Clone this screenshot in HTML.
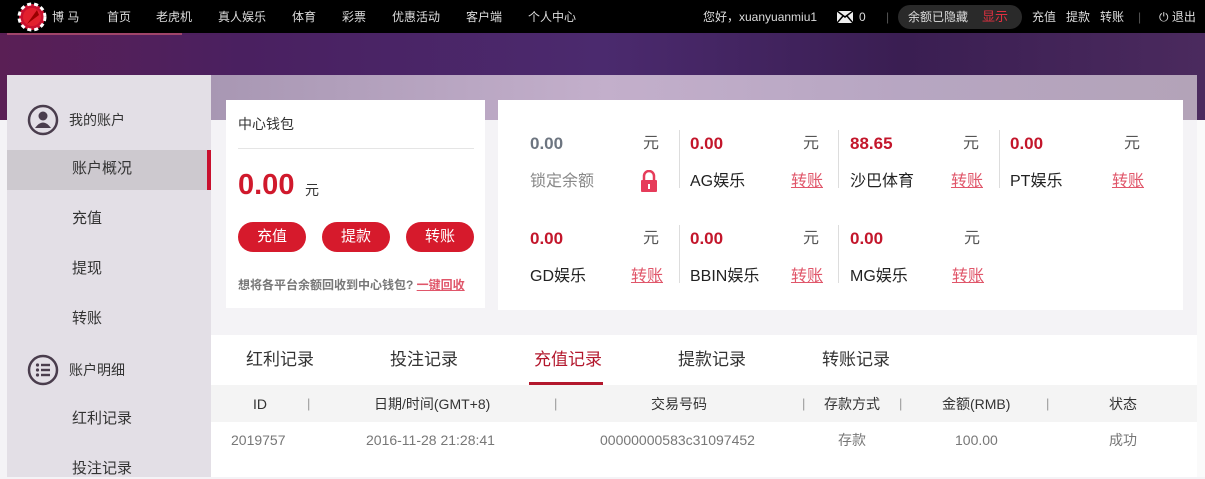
<!DOCTYPE html>
<html><head><meta charset="utf-8"><style>
*{margin:0;padding:0;box-sizing:border-box}
body{width:1205px;height:477px;overflow:hidden;background:#f4f3f6;font-family:"Liberation Sans","Noto Sans CJK SC",sans-serif;position:relative;color:#333}
.abs{position:absolute}
.top{left:0;top:0;width:1205px;height:33px;background:#000;color:#ddd;font-size:12px}
.top span{position:absolute;top:10px;white-space:nowrap;line-height:14px}
.banner{left:0;top:33px;width:1205px;height:87px;background:linear-gradient(90deg,#5a1f55 0%,#4a2060 20%,#4b2a6e 50%,#3a1e52 75%,#4b2a5e 100%)}
.band{left:211px;top:75px;width:986px;height:45px;background:linear-gradient(90deg,#a897b3,#c3afcb 40%,#b7a6c2 70%,#b3a3b8)}
.side{left:7px;top:75px;width:204px;height:402px;background:#e3dfe6}
.side div{position:absolute;font-size:15px;color:#333;line-height:20px}
.card{background:#fff}
.red{color:#d0192c}
.btn{position:absolute;top:222px;width:68px;height:30px;border-radius:15px;background:#d61a2c;color:#fff;font-size:15px;text-align:center;line-height:30px}
.cell{position:absolute;width:150px;height:70px}
.cell div{line-height:20px}
.cell .v{position:absolute;left:0;top:0;font-size:17px;font-weight:bold;color:#c3162b}
.cell .y{position:absolute;right:0;top:0;font-size:16px;color:#555}
.cell .n{position:absolute;left:0;top:38px;font-size:16px;color:#222}
.cell .t{position:absolute;right:0;top:38px;font-size:16px;color:#e0566a;text-decoration:underline}
.sep{position:absolute;width:1px;height:58px;background:#ddd}
.tab{position:absolute;top:350px;font-size:17px;color:#333;line-height:20px}
.th{position:absolute;top:396px;font-size:14px;color:#333;line-height:16px}
.td{position:absolute;top:432px;font-size:14px;color:#777;line-height:16px}
.bar{position:absolute;top:396px;font-size:13px;color:#999;line-height:16px}
</style></head><body>
<div class="abs top">
 <svg class="abs" style="left:17px;top:2px" width="30" height="30" viewBox="0 0 30 30"><circle cx="15" cy="15" r="13" fill="#c8102e" stroke="#fff" stroke-width="3" stroke-dasharray="4 3"/><circle cx="15" cy="15" r="9" fill="#e2202e"/><path d="M10 22 L20 8 L22 13 Z" fill="#900"/></svg>
 <span style="left:52px">博 马</span>
 <span style="left:107px">首页</span><span style="left:156px">老虎机</span><span style="left:218px">真人娱乐</span><span style="left:292px">体育</span><span style="left:342px">彩票</span><span style="left:392px">优惠活动</span><span style="left:466px">客户端</span><span style="left:528px">个人中心</span>
 <span style="left:703px">您好，xuanyuanmiu1</span>
 <svg class="abs" style="left:837px;top:11px" width="16" height="12" viewBox="0 0 16 12"><rect width="16" height="12" fill="#eee"/><path d="M0 0 L8 6 L16 0 M0 12 L6 5 M16 12 L10 5" stroke="#000" stroke-width="1.5" fill="none"/></svg>
 <span style="left:859px">0</span><span style="left:886px;color:#555">|</span>
 <div class="abs" style="left:898px;top:5px;width:124px;height:24px;border-radius:12px;background:#2a2a2a"></div>
 <span style="left:908px">余额已隐藏</span><span style="left:982px;color:#e03040;font-size:13px">显示</span>
 <span style="left:1032px">充值</span><span style="left:1066px">提款</span><span style="left:1100px">转账</span><span style="left:1138px;color:#555">|</span>
 <span style="left:1159px">⏻ 退出</span>
</div>
<div class="abs banner"></div>
<div class="abs" style="left:7px;top:33px;width:175px;height:2px;background:#a0456a"></div>
<div class="abs band"></div>
<div class="abs" style="left:1197px;top:120px;width:8px;height:357px;background:#fafafa"></div>
<div class="abs side">
 <svg class="abs" style="left:20px;top:29px" width="32" height="32" viewBox="0 0 32 32"><circle cx="16" cy="16" r="14" fill="none" stroke="#4a3d4d" stroke-width="2.5"/><circle cx="16" cy="12" r="4.5" fill="#4a3d4d"/><path d="M8 24 Q16 13 24 24 Z" fill="#4a3d4d"/></svg>
 <div style="left:62px;top:35px;font-size:14px">我的账户</div>
 <div style="left:0;top:75px;width:204px;height:40px;background:#cdc9cf"></div>
 <div style="left:200px;top:75px;width:4px;height:40px;background:#c8102e"></div>
 <div style="left:65px;top:84px">账户概况</div>
 <div style="left:65px;top:134px">充值</div>
 <div style="left:65px;top:184px">提现</div>
 <div style="left:65px;top:234px">转账</div>
 <svg class="abs" style="left:20px;top:279px" width="32" height="32" viewBox="0 0 32 32"><circle cx="16" cy="16" r="14" fill="none" stroke="#4a3d4d" stroke-width="2.5"/><g fill="#4a3d4d"><circle cx="10.5" cy="11" r="1.6"/><circle cx="10.5" cy="16" r="1.6"/><circle cx="10.5" cy="21" r="1.6"/><rect x="14" y="9.8" width="9" height="2.4"/><rect x="14" y="14.8" width="9" height="2.4"/><rect x="14" y="19.8" width="9" height="2.4"/></g></svg>
 <div style="left:62px;top:285px;font-size:14px">账户明细</div>
 <div style="left:65px;top:334px">红利记录</div>
 <div style="left:65px;top:384px">投注记录</div>
</div>
<div class="abs card" style="left:226px;top:100px;width:259px;height:208px"></div>
<div class="abs" style="left:238px;top:115px;font-size:14px;line-height:18px">中心钱包</div>
<div class="abs" style="left:238px;top:148px;width:236px;height:1px;background:#e5e5e5"></div>
<div class="abs red" style="left:238px;top:168px;font-size:29px;font-weight:bold;line-height:34px">0.00</div>
<div class="abs" style="left:305px;top:181px;font-size:14px;line-height:18px">元</div>
<div class="btn" style="left:238px">充值</div><div class="btn" style="left:322px">提款</div><div class="btn" style="left:406px">转账</div>
<div class="abs" style="left:238px;top:278px;font-size:12px;color:#777;line-height:14px;font-weight:bold">想将各平台余额回收到中心钱包? <span style="color:#e0566a;text-decoration:underline">一键回收</span></div>
<div class="abs card" style="left:498px;top:100px;width:685px;height:210px"></div>
<div class="cell" style="left:530px;top:134px;width:133px"><div class="v" style="color:#6d7580">0.00</div><div class="y" style="right:4px">元</div><div class="n" style="color:#888">锁定余额</div>
 <svg class="abs" style="right:5px;top:36px" width="18" height="22" viewBox="0 0 18 22"><path d="M4 10 V6 a5 5 0 0 1 10 0 V10" fill="none" stroke="#e63c5a" stroke-width="2.5"/><rect x="1" y="10" width="16" height="12" rx="1" fill="#e63c5a"/><rect x="8" y="14" width="2" height="5" fill="#fff"/></svg></div>
<div class="sep" style="left:679px;top:130px"></div>
<div class="cell" style="left:690px;top:134px;width:133px"><div class="v">0.00</div><div class="y" style="right:4px">元</div><div class="n">AG娱乐</div><div class="t">转账</div></div>
<div class="sep" style="left:838px;top:130px"></div>
<div class="cell" style="left:850px;top:134px;width:133px"><div class="v">88.65</div><div class="y" style="right:4px">元</div><div class="n">沙巴体育</div><div class="t">转账</div></div>
<div class="sep" style="left:999px;top:130px"></div>
<div class="cell" style="left:1010px;top:134px;width:134px"><div class="v">0.00</div><div class="y" style="right:4px">元</div><div class="n">PT娱乐</div><div class="t">转账</div></div>
<div class="cell" style="left:530px;top:229px;width:133px"><div class="v">0.00</div><div class="y" style="right:4px">元</div><div class="n">GD娱乐</div><div class="t">转账</div></div>
<div class="sep" style="left:679px;top:225px"></div>
<div class="cell" style="left:690px;top:229px;width:133px"><div class="v">0.00</div><div class="y" style="right:4px">元</div><div class="n">BBIN娱乐</div><div class="t">转账</div></div>
<div class="sep" style="left:838px;top:225px"></div>
<div class="cell" style="left:850px;top:229px;width:134px"><div class="v">0.00</div><div class="y" style="right:4px">元</div><div class="n">MG娱乐</div><div class="t">转账</div></div>
<div class="abs card" style="left:211px;top:335px;width:986px;height:50px"></div>
<div class="tab" style="left:246px">红利记录</div><div class="tab" style="left:390px">投注记录</div><div class="tab" style="left:534px;color:#b3182d">充值记录</div><div class="tab" style="left:678px">提款记录</div><div class="tab" style="left:822px">转账记录</div>
<div class="abs" style="left:529px;top:382px;width:74px;height:3px;background:#b3182d"></div>
<div class="abs" style="left:211px;top:385px;width:986px;height:37px;background:#f4f4f4"></div>
<div class="abs" style="left:211px;top:422px;width:986px;height:55px;background:#fff"></div>
<div class="th" style="left:253px">ID</div><div class="bar" style="left:307px">|</div>
<div class="th" style="left:374px">日期/时间(GMT+8)</div><div class="bar" style="left:554px">|</div>
<div class="th" style="left:651px">交易号码</div><div class="bar" style="left:802px">|</div>
<div class="th" style="left:824px">存款方式</div><div class="bar" style="left:899px">|</div>
<div class="th" style="left:942px">金额(RMB)</div><div class="bar" style="left:1046px">|</div>
<div class="th" style="left:1109px">状态</div>
<div class="td" style="left:231px">2019757</div><div class="td" style="left:366px">2016-11-28 21:28:41</div><div class="td" style="left:600px">00000000583c31097452</div><div class="td" style="left:838px">存款</div><div class="td" style="left:955px">100.00</div><div class="td" style="left:1109px">成功</div>
</body></html>
